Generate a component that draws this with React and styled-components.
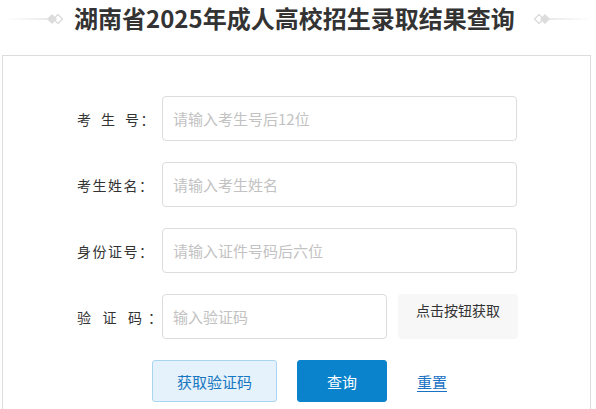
import React from "react";
import styled, { createGlobalStyle } from "styled-components";

const Global = createGlobalStyle`
  html, body { margin: 0; padding: 0; background: #fff; }
  body { font-family: "Noto Sans CJK SC", "Noto Sans", sans-serif; color: #333; }
  * { box-sizing: border-box; }
`;

const Page = styled.div`
  width: 596px;
  height: 409px;
  overflow: hidden;
`;

const Header = styled.header`
  display: flex;
  align-items: center;
  height: 36px;
  padding-left: 5px;
`;

const Title = styled.h1`
  margin: 0;
  font-size: 24px;
  font-weight: 700;
  line-height: 34px;
  color: #333;
  white-space: nowrap;
`;

const DecoSvg = styled.svg`
  display: block;
  flex: none;
  margin-top: 1px;
  ${(p) => (p.$right ? "transform: scaleX(-1); margin-left: 19px;" : "margin-right: 11px;")}
`;

function Deco({ right, id }) {
  return (
    <DecoSvg $right={right} width="58" height="12" viewBox="0 0 58 12">
      <defs>
        <linearGradient id={id} x1="0" x2="1" y1="0" y2="0">
          <stop offset="0" stopColor="#ffffff" />
          <stop offset="1" stopColor="#d4d4d4" />
        </linearGradient>
      </defs>
      <rect x="0" y="5.5" width="43" height="1" fill={`url(#${id})`} />
      <polygon points="48.5,6 53,1.5 57.5,6 53,10.5" fill="#fff" stroke="#dcdcdc" strokeWidth="1.4" />
      <polygon points="42,6 47,1 52,6 47,11" fill="#dcdcdc" />
    </DecoSvg>
  );
}

const Panel = styled.section`
  margin: 19px 0 0 2px;
  width: 589px;
  height: 360px;
  border: 1px solid #dddddd;
  border-bottom: none;
  padding: 40px 0 0 74px;
`;

const Form = styled.div`
  display: flex;
  flex-direction: column;
  gap: 21px;
`;

const Row = styled.div`
  display: flex;
  align-items: center;
`;

const Label = styled.span`
  flex: none;
  width: 85px;
  font-size: 14px;
  letter-spacing: 1.5px;
  color: #333;
  white-space: nowrap;
  line-height: 20px;
`;

const Sp = styled.span`
  display: inline-block;
  width: ${(p) => p.$w}px;
`;

const Input = styled.input`
  flex: none;
  width: ${(p) => p.$w || 355}px;
  height: 45px;
  border: 1px solid #dcdcdc;
  border-radius: 4px;
  padding: 0 10px;
  font-family: "Noto Sans CJK SC", "Noto Sans", sans-serif;
  font-size: 15px;
  color: #333;
  outline: none;
  background: #fff;
  &::placeholder { color: #c2c2c2; }
`;

const CodeBox = styled.div`
  flex: none;
  width: 120px;
  height: 45px;
  margin-left: 11px;
  background: #f7f7f7;
  border-radius: 4px;
  text-align: center;
  font-size: 14px;
  line-height: 32px;
  color: #333;
`;

const Actions = styled.div`
  display: flex;
  align-items: center;
  margin-top: 21px;
  padding-left: 75px;
`;

const Button = styled.button`
  flex: none;
  width: ${(p) => p.$w}px;
  height: 42px;
  margin-right: ${(p) => p.$mr || 0}px;
  border-radius: 3px;
  font-family: "Noto Sans CJK SC", "Noto Sans", sans-serif;
  font-size: 15px;
  cursor: pointer;
  border: 1px solid ${(p) => (p.$primary ? "#0a82cc" : "#a9d5f2")};
  background: ${(p) => (p.$primary ? "#0a82cc" : "#e5f2fb")};
  color: ${(p) => (p.$primary ? "#ffffff" : "#1877c2")};
`;

const Link = styled.a`
  font-size: 15px;
  color: #1a72c4;
  text-decoration: underline;
  text-underline-offset: 3px;
  cursor: pointer;
`;

export default function App() {
  return (
    <Page>
      <Global />
      <Header>
        <Deco id="gl" />
        <Title>湖南省2025年成人高校招生录取结果查询</Title>
        <Deco id="gr" right />
      </Header>
      <Panel>
        <Form>
          <Row>
            <Label>考<Sp $w={8.5} />生<Sp $w={8.5} />号：</Label>
            <Input placeholder="请输入考生号后12位" />
          </Row>
          <Row>
            <Label>考生姓名：</Label>
            <Input placeholder="请输入考生姓名" />
          </Row>
          <Row>
            <Label>身份证号：</Label>
            <Input placeholder="请输入证件号码后六位" />
          </Row>
          <Row>
            <Label>验<Sp $w={10} />证<Sp $w={10} />码<Sp $w={4.5} />：</Label>
            <Input $w={225} placeholder="输入验证码" />
            <CodeBox>点击按钮获取</CodeBox>
          </Row>
        </Form>
        <Actions>
          <Button $w={125} $mr={20}>获取验证码</Button>
          <Button $w={90} $mr={30} $primary>查询</Button>
          <Link>重置</Link>
        </Actions>
      </Panel>
    </Page>
  );
}
